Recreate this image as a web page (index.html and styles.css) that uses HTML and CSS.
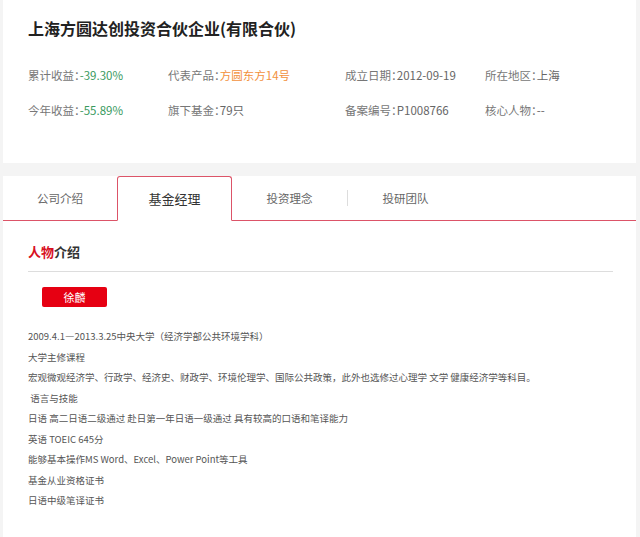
FILE: index.html
```html
<!DOCTYPE html>
<html lang="zh-CN">
<head>
    <meta charset="UTF-8" />
    <meta name="viewport" content="width=device-width, initial-scale=1.0" />
    <title>上海方圆达创投资合伙企业(有限合伙)</title>
    <link rel="stylesheet" href="styles.css">
</head>
<body>
    <div class="card summary">
      <h1 class="company-name">上海方圆达创投资合伙企业(有限合伙)</h1>

      <div class="info-grid">
        <div class="info-item"><span class="label">累计收益：</span><span class="value green">-39.30%</span></div>
        <div class="info-item"><span class="label">代表产品：</span><span class="value orange">方圆东方14号</span></div>
        <div class="info-item"><span class="label">成立日期：</span><span class="value">2012-09-19</span></div>
        <div class="info-item"><span class="label">所在地区：</span><span class="value">上海</span></div>

        <div class="info-item"><span class="label">今年收益：</span><span class="value green">-55.89%</span></div>
        <div class="info-item"><span class="label">旗下基金：</span><span class="value">79只</span></div>
        <div class="info-item"><span class="label">备案编号：</span><span class="value">P1008766</span></div>
        <div class="info-item"><span class="label">核心人物：</span><span class="value">--</span></div>
      </div>
    </div>

    <div class="card detail">
      <div class="tabs">
        <div class="tab first">公司介绍</div>
        <div class="tab active">基金经理</div>
        <div class="tab">投资理念</div>
        <div class="tab-sep"></div>
        <div class="tab">投研团队</div>
      </div>

      <div class="section">
        <h2 class="section-title"><span class="hl">人物</span>介绍</h2>

        <div class="person-btn">徐麟</div>

        <div class="resume">
          <p>2009.4.1—2013.3.25中央大学（经济学部公共环境学科）</p>
          <p>大学主修课程</p>
          <p>宏观微观经济学、行政学、经济史、财政学、环境伦理学、国际公共政策，此外也选修过心理学 文学 健康经济学等科目。</p>
          <p>&nbsp;语言与技能</p>
          <p>日语 高二日语二级通过 赴日第一年日语一级通过 具有较高的口语和笔译能力</p>
          <p>英语 TOEIC 645分</p>
          <p>能够基本操作MS Word、Excel、Power Point等工具</p>
          <p>基金从业资格证书</p>
          <p>日语中级笔译证书</p>
        </div>
      </div>
    </div>
</body>
</html>
```

FILE: styles.css
```css
body {
  margin: 0;
  background-color: #f4f4f4;
  font-family: "Noto Sans CJK SC", "Noto Sans", sans-serif;
  color: #333;
}
.card {
  background-color: #fff;
  margin: 0 4px 0 3px;
}
.summary {
  height: 163px;
  box-sizing: border-box;
  padding: 17px 25px 0 25px;
}
.company-name {
  margin: 0;
  font-size: 16px;
  line-height: 22px;
  font-weight: bold;
  color: #222;
}
.info-grid {
  display: grid;
  grid-template-columns: 140px 177px 140px auto;
  row-gap: 19px;
  margin-top: 28px;
  font-size: 11.5px;
  line-height: 16px;
}
.label {
  color: #777;
  font-feature-settings: "halt";
}
.value {
  color: #666;
}
.green {
  color: #3a9a5e;
}
.orange {
  color: #f2913d;
}
.detail {
  margin-top: 13px;
  min-height: 361px;
}
.tabs {
  display: flex;
  align-items: center;
  height: 44px;
  border-bottom: 1px solid #dc5468;
}
.tab {
  width: 115px;
  height: 44px;
  display: flex;
  align-items: center;
  justify-content: center;
  font-size: 11.5px;
  color: #666;
}
.tab.first {
  width: 114px;
}
.tab.active {
  box-sizing: border-box;
  height: 45px;
  margin-bottom: -1px;
  align-self: flex-start;
  border: 1px solid #dc5468;
  border-bottom-color: #fff;
  border-radius: 3px 3px 0 0;
  background-color: #fff;
  font-size: 13px;
  color: #333;
}
.tab-sep {
  width: 1px;
  height: 16px;
  background-color: #ddd;
}
.section {
  padding: 22px 23px 30px 25px;
}
.section-title {
  margin: 0;
  padding-bottom: 10px;
  border-bottom: 1px solid #ddd;
  font-size: 13px;
  line-height: 18px;
  font-weight: bold;
  color: #333;
}
.hl {
  color: #d8101f;
}
.person-btn {
  width: 65px;
  height: 20px;
  margin: 15px 0 0 14px;
  border-radius: 2px;
  background-color: #e60012;
  color: #fff;
  font-size: 11px;
  line-height: 20px;
  text-align: center;
}
.resume {
  margin-top: 19px;
  font-size: 9.5px;
  line-height: 20.5px;
  color: #555;
}
.resume p {
  margin: 0;
}
```
